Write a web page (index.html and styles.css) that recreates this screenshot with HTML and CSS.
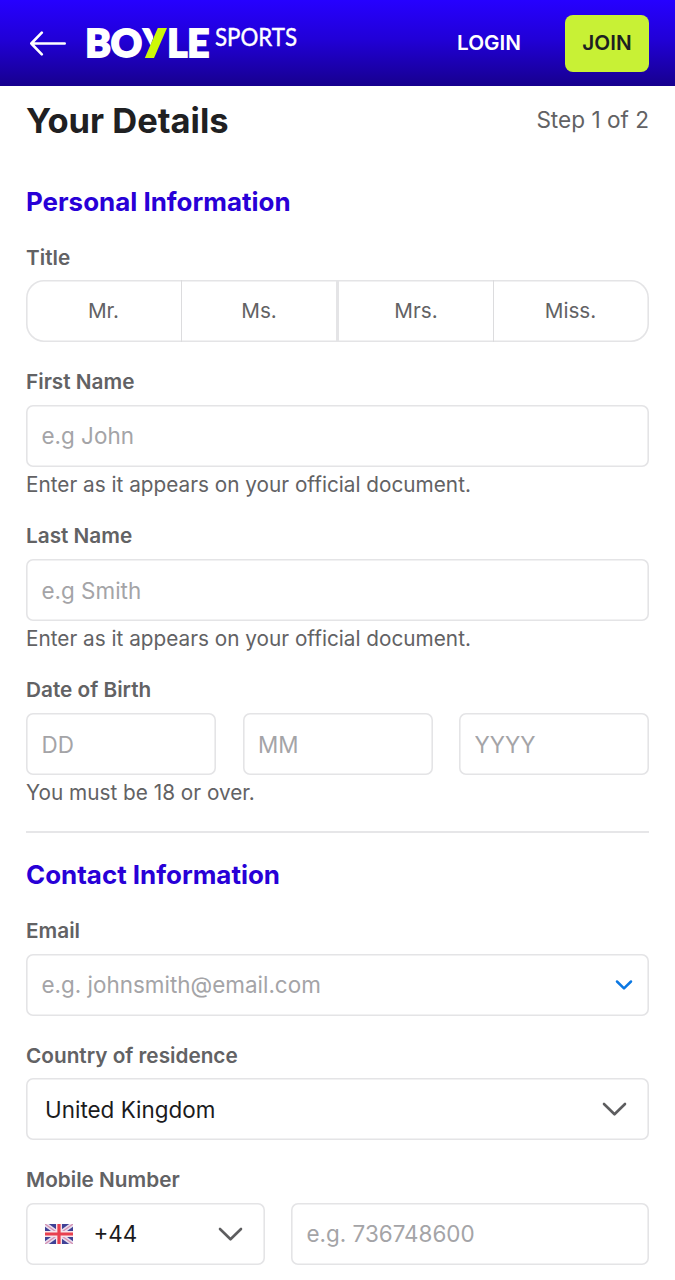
FILE: index.html
```
<!DOCTYPE html>
<html lang="en">
<head>
<meta charset="utf-8">
<title>BoyleSports – Your Details</title>
<link rel="stylesheet" href="styles.css">
</head>
<body>
<header class="topbar">
  <svg class="back" width="38" height="26" viewBox="0 0 38 26" fill="none" stroke="#fff" stroke-width="2.6" stroke-linecap="round" stroke-linejoin="round"><path d="M35.7 13.5H2.3M12.8 2.7 2.3 13.5 12.8 24.3"/></svg>
  <svg class="logo" width="214" height="36" viewBox="0 0 214 36">
    <defs><clipPath id="arm"><path d="M50 0H71.5L64.5 20.5H50Z"/></clipPath></defs>
    <g class="logo-bold">
      <text x="-0.8" y="32.1" textLength="57" lengthAdjust="spacingAndGlyphs">BO</text>
      <text x="57.4" y="32.1" textLength="22" lengthAdjust="spacingAndGlyphs" clip-path="url(#arm)">Y</text>
      <text x="81.3" y="32.1" textLength="42" lengthAdjust="spacingAndGlyphs">LE</text>
    </g>
    <path d="M71.8 3H81L68 33H58.8Z" fill="#ccf808"/>
    <text class="logo-light" x="129" y="21.4" textLength="82" lengthAdjust="spacingAndGlyphs">SPORTS</text>
  </svg>
  <a class="login">LOGIN</a>
  <a class="join">JOIN</a>
</header>
<main class="page">
  <div class="page-head">
    <h1>Your Details</h1>
    <span class="step">Step 1 of 2</span>
  </div>

  <section class="section">
    <h2>Personal Information</h2>
    <div class="field">
      <span class="label">Title</span>
      <div class="segments">
        <span class="segment">Mr.</span>
        <span class="segment segment-wide">Ms.</span>
        <span class="segment">Mrs.</span>
        <span class="segment">Miss.</span>
      </div>
    </div>
    <div class="field field-help">
      <label class="label" for="first">First Name</label>
      <input class="box" id="first" placeholder="e.g John">
      <span class="help">Enter as it appears on your official document.</span>
    </div>
    <div class="field field-help">
      <label class="label" for="last">Last Name</label>
      <input class="box" id="last" placeholder="e.g Smith">
      <span class="help">Enter as it appears on your official document.</span>
    </div>
    <div class="field field-help">
      <span class="label">Date of Birth</span>
      <div class="dob">
        <input class="box" placeholder="DD">
        <input class="box" placeholder="MM">
        <input class="box" placeholder="YYYY">
      </div>
      <span class="help">You must be 18 or over.</span>
    </div>
  </section>

  <section class="section section-contact">
    <h2>Contact Information</h2>
    <div class="field">
      <label class="label" for="email">Email</label>
      <div class="box combo">
        <input class="bare" id="email" placeholder="e.g. johnsmith@email.com">
        <svg width="18" height="12" viewBox="0 0 18 12" fill="none" stroke="#0b78e3" stroke-width="2.5" stroke-linecap="round" stroke-linejoin="round"><path d="M2 2.5l7 6.9 7-6.9"/></svg>
      </div>
    </div>
    <div class="field">
      <span class="label">Country of residence</span>
      <div class="box select">
        <span class="country">United Kingdom</span>
        <svg class="chevron" width="26" height="16" viewBox="0 0 26 16" fill="none" stroke="#5d5d5f" stroke-width="2.6" stroke-linecap="round" stroke-linejoin="round"><path d="M2 3 12.5 13.3 23 3"/></svg>
      </div>
    </div>
    <div class="field">
      <span class="label">Mobile Number</span>
      <div class="phone">
        <div class="box select">
          <svg class="flag" width="28" height="20" viewBox="0 0 28 20">
            <path fill="#3f4196" d="M0 0h28v20H0z"/>
            <path d="M0 0l28 20M28 0L0 20" stroke="#e6deee" stroke-width="4.4"/>
            <path d="M0 0l28 20M28 0L0 20" stroke="#d58fb0" stroke-width="1.2"/>
            <path d="M14 0v20M0 10h28" stroke="#f7e4ea" stroke-width="6"/>
            <path d="M14 0v20M0 10h28" stroke="#e8404f" stroke-width="3.2"/>
          </svg>
          <span>+44</span>
          <svg class="chevron" width="26" height="16" viewBox="0 0 26 16" fill="none" stroke="#5d5d5f" stroke-width="2.6" stroke-linecap="round" stroke-linejoin="round"><path d="M2 3 12.5 13.3 23 3"/></svg>
        </div>
        <input class="box" placeholder="e.g. 736748600">
      </div>
    </div>
  </section>
</main>
</body>
</html>
```
FILE: styles.css
```
* { box-sizing: border-box; }

body {
  margin: 0;
  background: #fff;
  color: #626264;
  font-family: Inter, "Liberation Sans", sans-serif;
  height: 1280px;
  overflow: hidden;
}

.topbar {
  display: flex;
  align-items: center;
  height: 86px;
  padding: 0 26px 0 29px;
  background: linear-gradient(#2600ff, #2100d8 45%, #17008e);
  font-size: 20.7px;
  font-weight: 600;
}
.back { flex: none; }
.logo { flex: none; margin-left: 19px; overflow: visible; }
.logo-bold { fill: #fff; stroke: #fff; stroke-width: 2px; font: 900 38.8px Lato, sans-serif; }
.logo-light { fill: #fff; stroke: #fff; stroke-width: 0.4px; font: 400 24.8px Lato, sans-serif; }
.login { margin-left: auto; margin-right: 44px; padding-bottom: 1px; color: #fff; }
.join {
  display: flex;
  align-items: center;
  justify-content: center;
  width: 84px;
  height: 57px;
  padding-bottom: 1px;
  border-radius: 8px;
  background: #c8f135;
  color: #1d1f21;
}

.page { padding: 0 26px; }
.page-head {
  display: flex;
  align-items: center;
  justify-content: space-between;
  height: 68px;
}
h1 { margin: 0; padding-top: 1px; font-size: 34.5px; line-height: 42px; font-weight: 700; color: #202022; }
.step { font-size: 22.6px; line-height: 28px; padding-bottom: 1px; }

.section { padding-top: 32px; }
.section-contact { margin-top: 24.6px; padding-top: 26.6px; border-top: 2px solid #e6e6e8; }
h2 { margin: 0; font-size: 25.95px; line-height: 32px; font-weight: 700; color: #2800d7; }

.field { display: flex; flex-direction: column; padding-top: 26.8px; }
h2 + .field { padding-top: 26.6px; }
.label { font-size: 20.75px; line-height: 26px; font-weight: 600; margin-bottom: 9.8px; }
.field-help + .field-help { padding-top: 25.3px; }
.help { font-size: 20.75px; line-height: 26px; margin-top: 5px; }

.box {
  width: 100%;
  min-width: 0;
  height: 62px;
  padding: 0 16px 0 15.5px;
  border: 0;
  outline: 0;
  border-radius: 7px;
  background: #fff;
  box-shadow: inset 0 0 0 1.6px #e4e4e6;
  font: 400 22.45px Inter, "Liberation Sans", sans-serif;
  color: #1b1b1d;
}
.bare { flex: 1; min-width: 0; padding: 0; border: 0; background: none; font: inherit; }
::placeholder { color: #a4a4a7; opacity: 1; }

.segments {
  display: grid;
  grid-template-columns: 156fr 157fr 155fr 155fr;
  height: 62px;
  border-radius: 18px;
  box-shadow: inset 0 0 0 1.6px #e4e4e6;
  font-size: 20.7px;
}
.segment {
  display: flex;
  align-items: center;
  justify-content: center;
  padding-bottom: 1px;
  border-right: 1px solid #dcdcde;
}
.segment-wide { border-right-width: 3px; border-color: #e4e4e6; }
.segment:last-child { border: 0; padding-right: 2px; }

.dob { display: grid; grid-template-columns: repeat(3, 1fr); gap: 26.5px; }
.phone { display: grid; grid-template-columns: 239px 1fr; gap: 26px; }
.combo, .select { display: flex; align-items: center; }
.select { padding: 0 21px 0 19px; }
.country { padding-top: 1px; }
.chevron { margin-left: auto; }
.flag { margin-right: 20.5px; filter: blur(0.4px); }
```
